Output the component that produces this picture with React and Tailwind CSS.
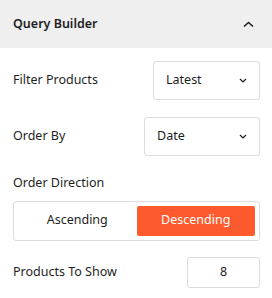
import { useState } from "react";

function Chevron({ up = false }) {
  return (
    <svg width="11" height="7" viewBox="0 0 11 7" className={up ? "rotate-180" : ""}>
      <path d="M1 1.5l4.5 4 4.5-4" fill="none" stroke="#1e1e1e" strokeWidth="1.6" />
    </svg>
  );
}

function Select({ value, width }) {
  return (
    <div className={`flex h-[39px] items-center justify-between rounded-[3px] border border-[#dcdcdc] bg-white pl-3 pr-[12px] ${width}`}>
      <span className="text-[12.5px] text-[#1e1e1e]">{value}</span>
      <svg width="8" height="5" viewBox="0 0 8 5">
        <path d="M1 1l3 3 3-3" fill="none" stroke="#1e1e1e" strokeWidth="1.2" />
      </svg>
    </div>
  );
}

export default function App() {
  const [dir, setDir] = useState("desc");

  return (
    <div className="w-[272px] h-[298px] bg-white font-['Noto_Sans',sans-serif] text-[#1e1e1e]">
      <div className="flex h-[48px] items-center justify-between bg-[#efefef] pl-[13px] pr-[18px]">
        <span className="text-[12.5px] font-semibold">Query Builder</span>
        <Chevron up />
      </div>

      <div className="pl-[13px] pr-[12px] pt-[13px]">
        <div className="flex items-center justify-between">
          <span className="text-[12.5px]">Filter Products</span>
          <Select value="Latest" width="w-[107px]" />
        </div>

        <div className="mt-[17px] flex items-center justify-between">
          <span className="text-[12.5px]">Order By</span>
          <Select value="Date" width="w-[116px]" />
        </div>

        <div className="mt-[18px] text-[12.5px]">Order Direction</div>

        <div className="mt-[8px] flex h-[40px] rounded-[3px] border border-[#dcdcdc] p-[4px]">
          <button
            onClick={() => setDir("asc")}
            className={`flex-1 rounded-[2px] text-[12.5px] ${dir === "asc" ? "bg-[#ff5a2e] text-white" : "text-[#1e1e1e]"}`}
          >
            Ascending
          </button>
          <button
            onClick={() => setDir("desc")}
            className={`flex-1 rounded-[2px] text-[12.5px] ${dir === "desc" ? "bg-[#ff5a2e] text-white" : "text-[#1e1e1e]"}`}
          >
            Descending
          </button>
        </div>

        <div className="mt-[16px] flex items-center justify-between">
          <span className="text-[12.5px]">Products To Show</span>
          <div className="flex h-[31px] w-[73px] items-center justify-center rounded-[3px] border border-[#dcdcdc] text-[12.5px]">
            8
          </div>
        </div>
      </div>
    </div>
  );
}
